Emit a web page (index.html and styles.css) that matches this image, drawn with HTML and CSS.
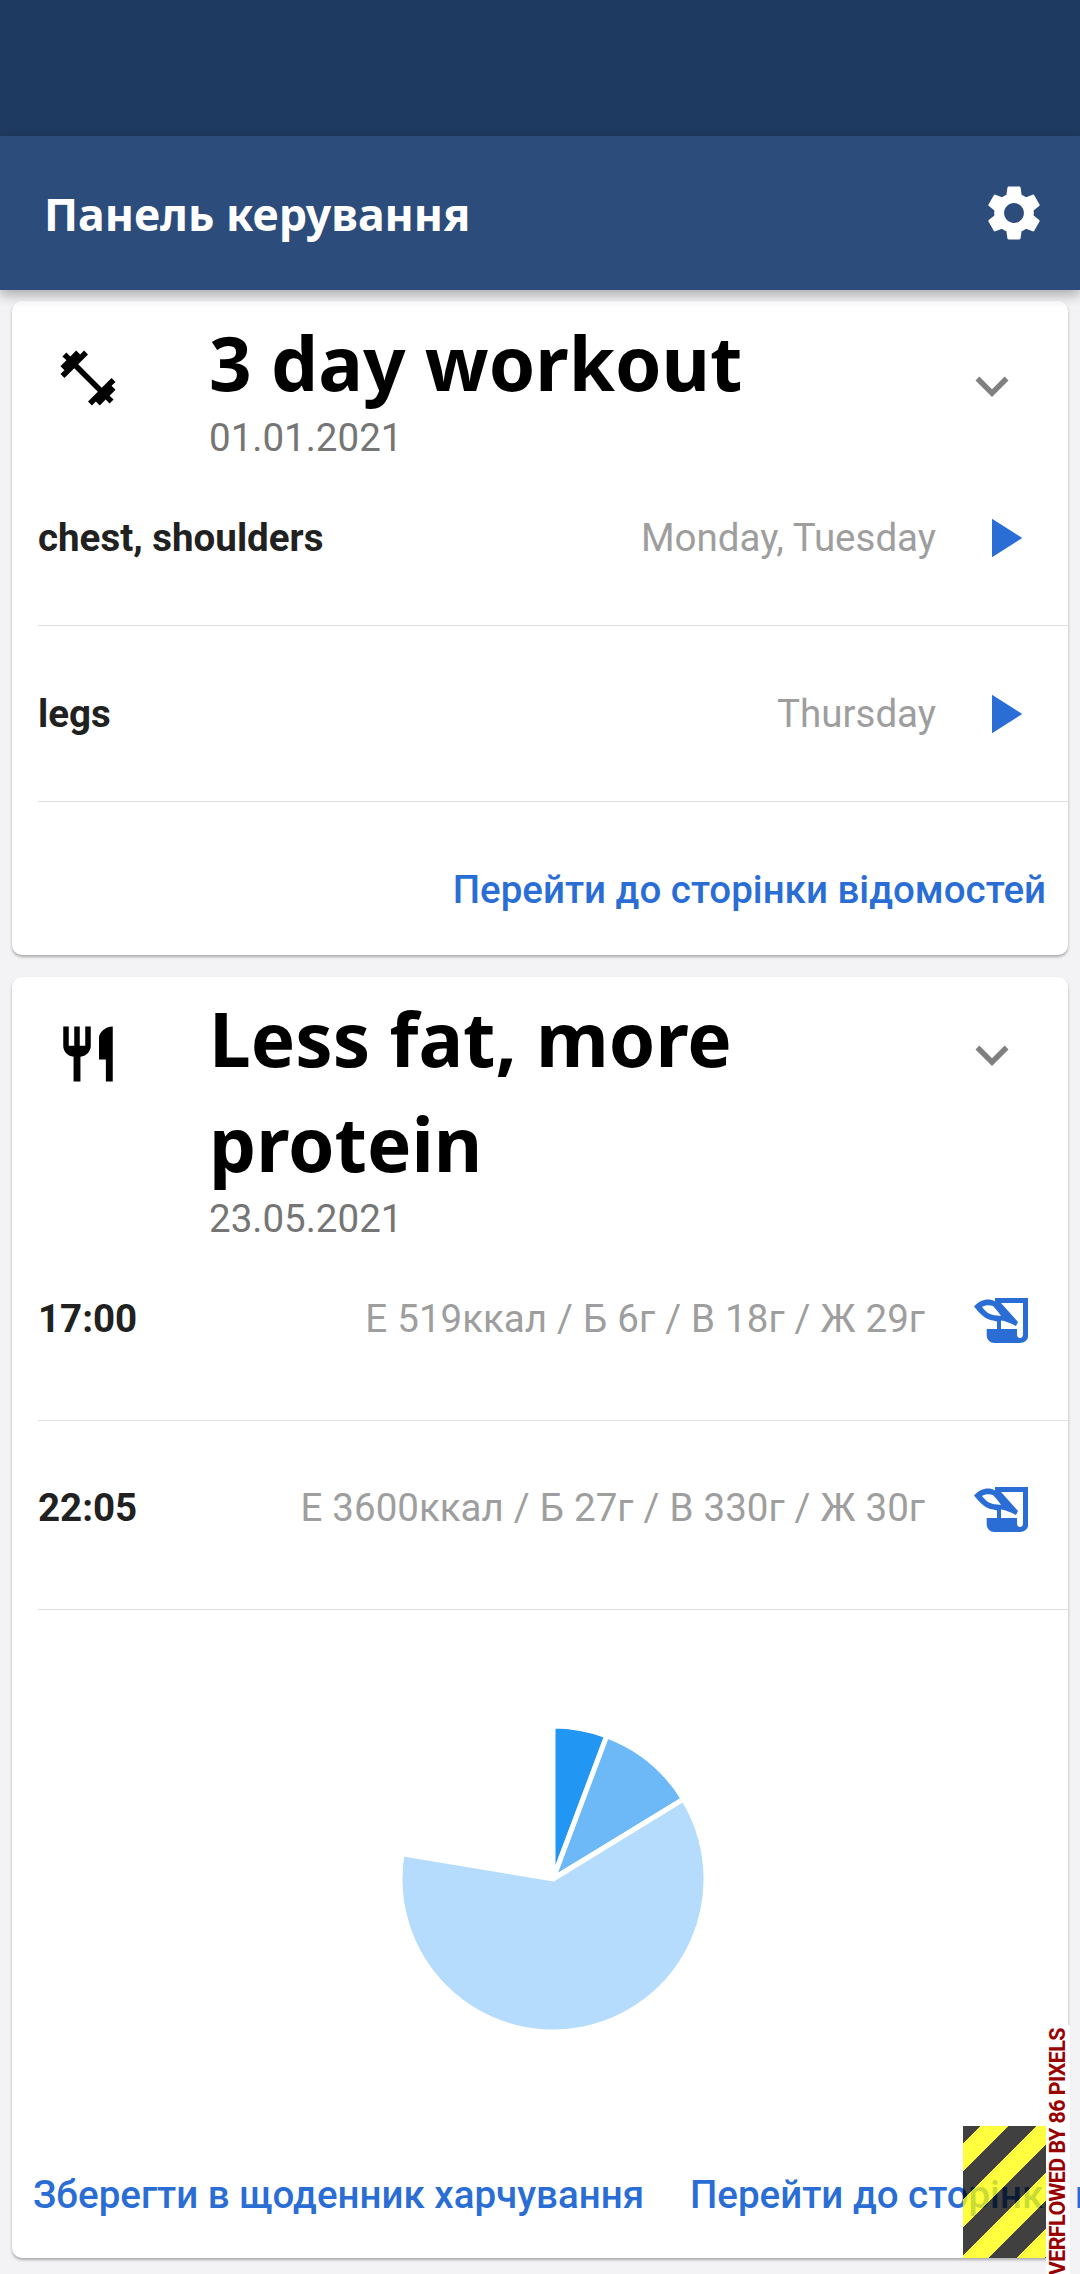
FILE: index.html
```html
<!DOCTYPE html>
<html lang="uk">
<head>
  <meta charset="UTF-8">
  <title>Панель керування</title>
  <link rel="stylesheet" href="styles.css">
</head>
<body>
  <div class="status-bar"></div>
  <header class="app-bar">
    <h1>Панель керування</h1>
    <svg class="icon gear" viewBox="0 0 24 24"><path d="M19.14,12.94c0.04-0.3,0.06-0.61,0.06-0.94c0-0.32-0.02-0.64-0.07-0.94l2.03-1.58c0.18-0.14,0.23-0.41,0.12-0.61 l-1.92-3.32c-0.12-0.22-0.37-0.29-0.59-0.22l-2.39,0.96c-0.5-0.38-1.03-0.7-1.62-0.94L14.4,2.81c-0.04-0.24-0.24-0.41-0.48-0.41 h-3.84c-0.24,0-0.43,0.17-0.47,0.41L9.25,5.35C8.66,5.59,8.12,5.92,7.63,6.29L5.24,5.33c-0.22-0.08-0.47,0-0.59,0.22L2.74,8.87 C2.62,9.08,2.66,9.34,2.86,9.48l2.03,1.58C4.84,11.36,4.8,11.69,4.8,12s0.02,0.64,0.07,0.94l-2.03,1.58 c-0.18,0.14-0.23,0.41-0.12,0.61l1.92,3.32c0.12,0.22,0.37,0.29,0.59,0.22l2.39-0.96c0.5,0.38,1.03,0.7,1.62,0.94l0.36,2.54 c0.05,0.24,0.24,0.41,0.48,0.41h3.84c0.24,0,0.44-0.17,0.47-0.41l0.36-2.54c0.59-0.24,1.13-0.56,1.62-0.94l2.39,0.96 c0.22,0.08,0.47,0,0.59-0.22l1.92-3.32c0.12-0.22,0.07-0.47-0.12-0.61L19.14,12.94z M12,15.6c-1.98,0-3.6-1.62-3.6-3.6 s1.62-3.6,3.6-3.6s3.6,1.62,3.6,3.6S13.98,15.6,12,15.6z"/></svg>
  </header>

  <main class="content">
    <section class="card card-workout">
      <div class="card-head">
        <svg class="icon head-icon" viewBox="0 0 24 24"><path d="M20.57 14.86L22 13.43 20.57 12 17 15.57 8.43 7 12 3.43 10.57 2 9.14 3.43 7.71 2 5.57 4.14 4.14 2.71 2.71 4.14l1.43 1.43L2 7.71l1.43 1.43L2 10.57 3.43 12 7 8.43 15.57 17 12 20.57 13.43 22l1.43-1.43L16.29 22l2.14-2.14 1.43 1.43 1.43-1.43-1.43-1.43L22 16.29z"/></svg>
        <div class="head-text">
          <h2>3 day workout</h2>
          <div class="date">01.01.2021</div>
        </div>
        <svg class="icon chevron" viewBox="0 0 24 24"><path d="M16.59 8.59L12 13.17 7.41 8.59 6 10l6 6 6-6z"/></svg>
      </div>

      <div class="row">
        <span class="row-name">chest, shoulders</span>
        <span class="row-meta">Monday, Tuesday</span>
        <svg class="icon play" viewBox="0 0 24 24"><path d="M8 5v14l11-7z"/></svg>
      </div>
      <div class="row">
        <span class="row-name">legs</span>
        <span class="row-meta">Thursday</span>
        <svg class="icon play" viewBox="0 0 24 24"><path d="M8 5v14l11-7z"/></svg>
      </div>

      <div class="card-foot">
        <a class="link">Перейти до сторінки відомостей</a>
      </div>
    </section>

    <section class="card card-meals">
      <div class="card-head">
        <svg class="icon head-icon" viewBox="0 0 24 24"><path d="M11 9H9V2H7v7H5V2H3v7c0 2.12 1.66 3.84 3.75 3.97V22h2.5v-9.03C11.34 12.84 13 11.12 13 9V2h-2v7zm5-3v8h2.5v8H21V2c-2.76 0-5 2.24-5 4z"/></svg>
        <div class="head-text">
          <h2>Less fat, more protein</h2>
          <div class="date">23.05.2021</div>
        </div>
        <svg class="icon chevron" viewBox="0 0 24 24"><path d="M16.59 8.59L12 13.17 7.41 8.59 6 10l6 6 6-6z"/></svg>
      </div>

      <div class="row">
        <span class="row-name">17:00</span>
        <span class="row-meta">Е 519ккал / Б 6г / В 18г / Ж 29г</span>
        <svg class="quill" viewBox="0 0 54 45"><path fill-rule="evenodd" d="M21 0H54.3V37C54.3 41.5 51 45 46 45H20.5C16 45 12.7 41.5 12.7 37V31H23V23.5C18 22 13 22 9 18 5 15 2 11 0 8.5 4 4 9 1.5 14 1.5 16.5 1.5 19 2 21 3.5ZM27 5H49V36C49 38.5 48 40 46 40 44 40 43 38.5 43 36V31H27V22.5C32 23 38 26 42 28L44 24ZM8 9C11 7 15 6.5 19 8 22 11 25 15 27 18 22 17 18 17.5 15 15.5 12 14 10 11 8 9Z"/></svg>
      </div>
      <div class="row">
        <span class="row-name">22:05</span>
        <span class="row-meta">Е 3600ккал / Б 27г / В 330г / Ж 30г</span>
        <svg class="quill" viewBox="0 0 54 45"><path fill-rule="evenodd" d="M21 0H54.3V37C54.3 41.5 51 45 46 45H20.5C16 45 12.7 41.5 12.7 37V31H23V23.5C18 22 13 22 9 18 5 15 2 11 0 8.5 4 4 9 1.5 14 1.5 16.5 1.5 19 2 21 3.5ZM27 5H49V36C49 38.5 48 40 46 40 44 40 43 38.5 43 36V31H27V22.5C32 23 38 26 42 28L44 24ZM8 9C11 7 15 6.5 19 8 22 11 25 15 27 18 22 17 18 17.5 15 15.5 12 14 10 11 8 9Z"/></svg>
      </div>

      <div class="chart">
        <svg class="pie" viewBox="-160 -160 320 320">
          <path class="slice-a" d="M0 0V-153A153 153 0 0 1 53.8 -143.2Z"/>
          <path class="slice-b" d="M0 0L53.8 -143.2A153 153 0 0 1 130.5 -79.9Z"/>
          <path class="slice-c" d="M0 0L130.5 -79.9A153 153 0 1 1 -150.9 -25.2Z"/>
        </svg>
      </div>

      <div class="actions">
        <a class="link">Зберегти в щоденник харчування</a>
        <a class="link">Перейти до сторінки відомостей</a>
      </div>
      <div class="hazard"></div>
      <div class="overflow-label"><span>OVERFLOWED BY 86 PIXELS</span></div>
    </section>
  </main>
</body>
</html>
```

FILE: styles.css
```css
html, body {
  margin: 0;
  padding: 0;
}

body {
  width: 1080px;
  height: 2274px;
  overflow: hidden;
  background-color: #f3f3f5;
  font-family: Roboto, sans-serif;
}

.status-bar {
  height: 136px;
  background-color: #1f3a60;
}

.app-bar {
  position: relative;
  z-index: 1;
  height: 154px;
  display: flex;
  align-items: center;
  justify-content: space-between;
  padding: 0 33px 0 44px;
  background-color: #2c4d7c;
  box-shadow: 0 5px 12px rgba(0, 0, 0, 0.3);
}

.app-bar h1 {
  margin: 0;
  font-family: "Noto Sans", sans-serif;
  font-size: 44.7px;
  font-weight: 700;
  color: #fff;
}

.icon {
  display: block;
  flex: none;
  width: 66px;
  height: 66px;
}

.gear {
  fill: #fff;
}

.content {
  display: flex;
  flex-direction: column;
  gap: 22px;
  padding: 11px 12px 0;
}

.card {
  position: relative;
  background: #fff;
  border-radius: 10px;
  box-shadow: 0 2px 3px rgba(0, 0, 0, 0.3);
}

.card-workout {
  height: 654px;
}

.card-meals {
  height: 1281px;
}

.card-head {
  display: flex;
  align-items: flex-start;
  padding: 0 43px;
}

.card-workout .card-head {
  height: 149px;
}

.card-meals .card-head {
  height: 255px;
}

.head-icon {
  fill: #000;
  margin-top: 44px;
}

.head-text {
  flex: 1;
  margin: 0 40px 0 88px;
  padding-top: 9px;
}

.card-head h2 {
  margin: 0;
  font-family: "Noto Sans", sans-serif;
  font-size: 74.6px;
  font-weight: 700;
  line-height: 105px;
  color: #000;
}

.date {
  font-size: 38.5px;
  line-height: 46px;
  color: #757575;
}

.chevron {
  fill: #808080;
  margin-top: 52px;
}

.card-meals .chevron {
  margin-top: 45px;
}

.row {
  display: flex;
  align-items: center;
  margin-left: 26px;
  border-bottom: 1px solid #e0e0e0;
  font-size: 38.5px;
}

.card-workout .row {
  height: 175px;
  padding-right: 32px;
}

.card-meals .row {
  height: 176px;
  padding: 0 40px 12px 0;
}

.card-meals .row-name, .card-meals .row-meta {
  margin-bottom: 4px;
}

.card-meals .row-meta {
  word-spacing: 0.5px;
}

.row-name {
  flex: 1;
  font-weight: 700;
  color: #212121;
}

.row-meta {
  color: #9e9e9e;
}

.play {
  fill: #2a6ed5;
  margin-left: 34px;
}

.quill {
  display: block;
  flex: none;
  width: 54px;
  height: 45px;
  margin-left: 49px;
  fill: #2a6ed5;
}

.card-foot {
  display: flex;
  justify-content: flex-end;
  padding: 65px 22px 0 0;
}

.link {
  font-size: 38.5px;
  font-weight: 500;
  color: #2a6ed5;
  white-space: nowrap;
}

.chart {
  display: flex;
  justify-content: center;
  padding: 109px 0 0 26px;
  height: 453px;
}

.pie {
  display: block;
  width: 320px;
  height: 320px;
}

.slice-a, .slice-b, .slice-c {
  stroke: #fff;
  stroke-width: 5;
}

.slice-a { fill: #2196f3; }
.slice-b { fill: #6db8f7; }
.slice-c { fill: #b5dcfc; }

.actions {
  display: flex;
  gap: 46px;
  padding-left: 21px;
}

/* debug stripes sit on top of the clipped link */
.hazard {
  position: absolute;
  left: 951px;
  bottom: 0;
  width: 83px;
  height: 132px;
  background: repeating-linear-gradient(135deg,
    rgba(0, 0, 0, 0.75) 0, rgba(0, 0, 0, 0.75) 12.7px,
    rgba(255, 255, 0, 0.75) 12.7px, rgba(255, 255, 0, 0.75) 32.5px,
    rgba(0, 0, 0, 0.75) 32.5px, rgba(0, 0, 0, 0.75) 39.6px);
}

.overflow-label {
  position: absolute;
  left: 1034px;
  bottom: -16px;
  width: 24px;
  height: 249px;
  overflow: hidden;
  background: #fff;
}

.overflow-label span {
  position: absolute;
  right: 0;
  top: 3px;
  transform-origin: top right;
  transform: rotate(-90deg) translateY(-24px);
  font-size: 21.5px;
  font-weight: 700;
  letter-spacing: -0.6px;
  line-height: 24px;
  color: #900;
  white-space: nowrap;
}
```
